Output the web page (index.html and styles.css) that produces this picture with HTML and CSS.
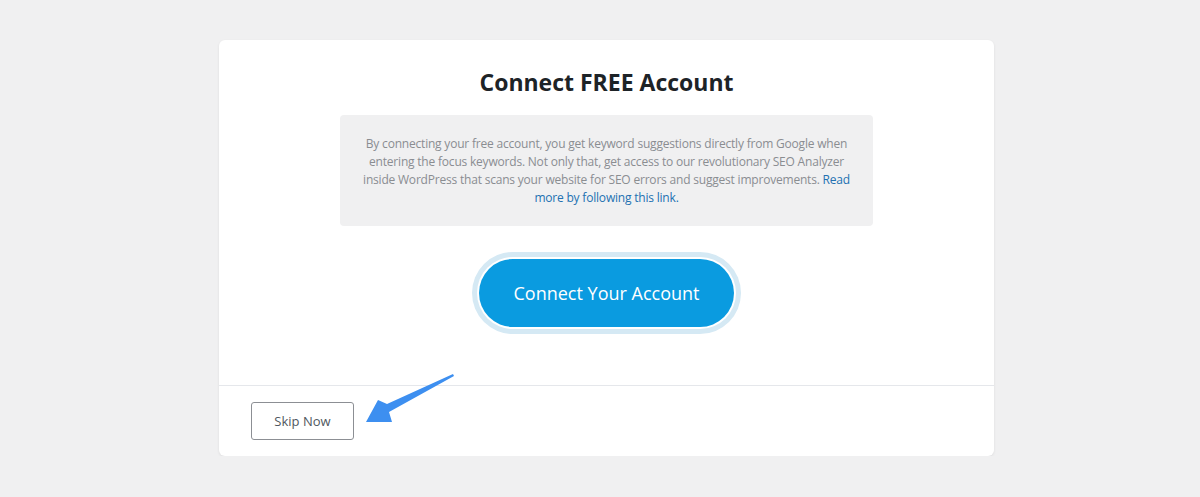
FILE: index.html
```html
<!DOCTYPE html>
<html lang="en">
<head>
  <meta charset="UTF-8" />
  <meta name="viewport" content="width=device-width, initial-scale=1.0"/>
  <title>Connect FREE Account</title>
  <link rel="stylesheet" href="styles.css">
</head>
<body>
  <div class="wizard">
    <div class="wizard-body">
      <h1>Connect FREE Account</h1>
      <div class="info-box">
        By connecting your free account, you get keyword suggestions directly from Google when entering the focus keywords. Not only that, get access to our revolutionary SEO Analyzer inside WordPress that scans your website for SEO errors and suggest improvements. <a href="#">Read more by following this link.</a>
      </div>
      <button class="btn-connect">Connect Your Account</button>
    </div>
    <div class="wizard-footer">
      <button class="btn-skip">Skip Now</button>
      <!-- pointer arrow -->
      <svg class="pointer" width="100" height="60" viewBox="360 370 100 60">
        <polygon points="453,373 387,403 378,399 366,421 392,421 389,411 454,375" fill="#3d8ff0"/>
      </svg>
    </div>
  </div>
</body>
</html>
```

FILE: styles.css
```css
* { margin: 0; padding: 0; box-sizing: border-box; }
body { background-color: #f0f0f1; font-family: "Open Sans", "Noto Sans", sans-serif; }

.wizard {
  width: 775px;
  margin: 40px 0 0 219px;
  background: #fff;
  border-radius: 6px;
  box-shadow: 0 1px 3px rgba(0, 0, 0, 0.08);
}

.wizard-body {
  padding: 28px 0 58px;
  display: flex;
  flex-direction: column;
  align-items: center;
}

h1 {
  font-size: 23px;
  font-weight: 700;
  color: #1d2327;
  line-height: 29px;
  margin-bottom: 18px;
}

.info-box {
  width: 533px;
  background: #f0f0f1;
  border-radius: 4px;
  padding: 20px 18px 19px;
  font-size: 12px;
  letter-spacing: -0.2px;
  line-height: 18px;
  color: #8a8d91;
  text-align: center;
}

.info-box a { color: #2271b1; text-decoration: none; }

.btn-connect {
  margin-top: 33px;
  width: 255px;
  height: 68px;
  border: none;
  border-radius: 34px;
  background: #0a9be0;
  color: #fff;
  font-family: inherit;
  font-size: 18px;
  cursor: pointer;
  box-shadow: 0 0 0 2px #fff, 0 0 0 7px #d5e9f4;
}

.wizard-footer {
  position: relative;
  border-top: 1px solid #e5e7eb;
  padding: 16px 32px;
}

.btn-skip {
  width: 103px;
  height: 38px;
  background: #fff;
  border: 1px solid #8c8f94;
  border-radius: 3px;
  color: #50575e;
  font-family: inherit;
  font-size: 13px;
  cursor: pointer;
}

.pointer {
  position: absolute;
  left: 141px;
  top: -15px;
}
```
